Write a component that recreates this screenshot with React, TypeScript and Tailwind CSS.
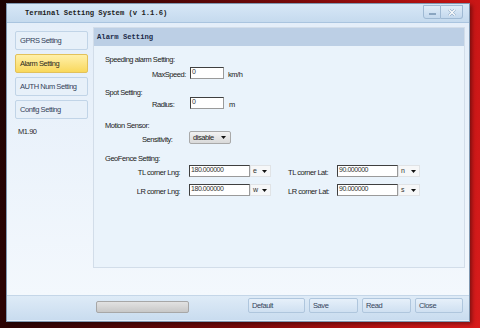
import React from "react";

const Arrow = () => (
  <svg width="5" height="3" viewBox="0 0 5 3" aria-hidden>
    <path d="M0 0h5L2.5 3z" fill="#111" />
  </svg>
);

function TextBox({ value, w }: { value: string; w: string }) {
  return (
    <div
      className={`${w} h-[12px] shrink-0 bg-white border border-[#3f3f3f] border-r-[#9a9a9a] border-b-[#9a9a9a] pl-[1px] text-[7px] leading-[8px] text-[#333] overflow-hidden`}
    >
      {value}
    </div>
  );
}

function DirSelect({ value, w }: { value: string; w: string }) {
  return (
    <div
      className={`${w} h-[12px] shrink-0 flex items-center justify-between bg-[#f6f7f8] border border-[#e0e3e6] pl-[2px] pr-[3px] text-[7px] leading-[8px] text-[#333]`}
    >
      <span>{value}</span>
      <Arrow />
    </div>
  );
}

const navItems = ["GPRS Setting", "Alarm Setting", "AUTH Num Setting", "Config Setting"];

export default function App() {
  return (
    <div className="relative w-[480px] h-[328px] overflow-hidden bg-[linear-gradient(100deg,#1c0303_0%,#3a0505_20%,#7a0909_55%,#c41414_85%,#d81c1c_100%)] font-['Liberation_Sans',Arial,sans-serif]">
      <div className="absolute left-[6px] top-[3px] w-[464px] h-[319px] flex flex-col border border-[#7f97b0] bg-[#e6f0fa] shadow-[2px_2px_4px_rgba(0,0,0,0.4)]">
        {/* Title bar */}
        <div className="h-[19px] flex items-start justify-between bg-gradient-to-b from-[#d7e7f6] to-[#c5daee] border-b border-[#a9c4df]">
          <div className="pl-[18px] h-full flex items-center font-['Liberation_Mono',monospace] font-bold text-[7.2px] text-[#1c1c1c]">
            Terminal Setting System (v 1.1.6)
          </div>
          <div className="flex pr-[6px] pt-[1px]">
            <div className="w-[18px] h-[14px] flex items-end justify-center pb-[3px] bg-gradient-to-b from-[#dfecf8] to-[#c3d8ed] border border-[#9fb9d3] rounded-bl-[3px]">
              <div className="w-[7px] h-[2px] bg-white border border-[#8aa5c0]" />
            </div>
            <div className="w-[22px] h-[14px] flex items-center justify-center bg-gradient-to-b from-[#dfecf8] to-[#c3d8ed] border border-l-0 border-[#9fb9d3] rounded-br-[3px]">
              <svg width="8" height="7" viewBox="0 0 8 7" aria-hidden>
                <path d="M1 0.5L7 6.5M7 0.5L1 6.5" stroke="#8aa5c0" strokeWidth="2.4" />
                <path d="M1 0.5L7 6.5M7 0.5L1 6.5" stroke="#ffffff" strokeWidth="1.2" />
              </svg>
            </div>
          </div>
        </div>

        {/* Body */}
        <div className="h-[272px] flex items-start pt-[4px] pl-[8px] bg-gradient-to-b from-[#e4eef9] to-[#f3f8fd]">
          {/* Nav */}
          <div className="w-[73px] mt-[4px] flex flex-col gap-[4px] text-[7.5px] tracking-[-0.45px]">
            {navItems.map((item) => {
              const active = item === "Alarm Setting";
              return (
                <div
                  key={item}
                  className={
                    active
                      ? "h-[19px] flex items-center pl-[4px] rounded-[2px] border border-[#e2c15a] bg-gradient-to-b from-[#fff0a8] to-[#f9d85a] text-[#2e2a1c]"
                      : "h-[19px] flex items-center pl-[4px] rounded-[2px] border border-[#c1d4e7] bg-[#e7f0f9] text-[#34425a]"
                  }
                >
                  {item}
                </div>
              );
            })}
            <div className="mt-[4px] pl-[3px] leading-[9px] text-[#2a2a2a]">M1.90</div>
          </div>

          {/* Panel */}
          <div className="ml-[5px] w-[372px] h-[241px] flex flex-col border border-[#d2dde9] bg-[#eaf3fb] text-[7.5px] tracking-[-0.45px] text-[#222]">
            <div className="h-[18px] flex items-center pl-[3px] bg-[#bccfe5] font-['Liberation_Mono',monospace] font-bold text-[7.2px] tracking-normal text-[#1b2a48]">
              Alarm Setting
            </div>
            <div className="flex flex-col pl-[11px]">
              <div className="mt-[10px] h-[8px] leading-[8px]">Speeding alarm Setting:</div>
              <div className="mt-[3px] h-[12px] flex items-start">
                <div className="w-[85px] pl-[47px] pt-[3px] leading-[9px]">MaxSpeed:</div>
                <TextBox value="0" w="w-[34px]" />
                <div className="ml-[4px] pt-[3px] leading-[9px]">km/h</div>
              </div>

              <div className="mt-[10px] h-[8px] leading-[8px]">Spot Setting:</div>
              <div className="h-[12px] flex items-start">
                <div className="w-[85px] pl-[47px] pt-[3px] leading-[9px]">Radius:</div>
                <TextBox value="0" w="w-[34px]" />
                <div className="ml-[5px] pt-[3px] leading-[9px]">m</div>
              </div>

              <div className="mt-[13px] h-[8px] leading-[8px]">Motion Sensor:</div>
              <div className="mt-[1px] h-[13px] flex items-start">
                <div className="w-[84px] pl-[37px] pt-[4px] leading-[9px]">Sensitivity:</div>
                <div className="w-[42px] h-[13px] flex items-center justify-between pl-[3px] pr-[4px] rounded-[2px] border border-[#a9a9a9] bg-gradient-to-b from-[#f2f2f2] to-[#d9d9d9] text-[#222]">
                  <span>disable</span>
                  <Arrow />
                </div>
              </div>

              <div className="mt-[11px] h-[8px] leading-[8px]">GeoFence Setting:</div>
              <div className="mt-[2px] h-[12px] flex items-start">
                <div className="w-[84px] pr-[9px] pt-[3px] leading-[9px] text-right">TL corner Lng:</div>
                <TextBox value="180.000000" w="w-[61px]" />
                <DirSelect value="e" w="w-[21px]" />
                <div className="ml-[17px] w-[49px] pt-[3px] leading-[9px] whitespace-nowrap">TL corner Lat:</div>
                <TextBox value="90.000000" w="w-[61px]" />
                <DirSelect value="n" w="w-[22px]" />
              </div>
              <div className="mt-[7px] h-[12px] flex items-start">
                <div className="w-[84px] pr-[9px] pt-[3px] leading-[9px] text-right">LR corner Lng:</div>
                <TextBox value="180.000000" w="w-[61px]" />
                <DirSelect value="w" w="w-[21px]" />
                <div className="ml-[17px] w-[49px] pt-[3px] leading-[9px] whitespace-nowrap">LR corner Lat:</div>
                <TextBox value="90.000000" w="w-[61px]" />
                <DirSelect value="s" w="w-[22px]" />
              </div>
            </div>
          </div>
        </div>

        {/* Footer */}
        <div className="h-[25px] flex items-start pt-[2px] border-t border-[#c4d6e8] bg-gradient-to-b from-[#deebf7] to-[#c9dcef] text-[7.5px] tracking-[-0.4px] text-[#34435c]">
          <div className="ml-[89px] mt-[3px] w-[93px] h-[12px] rounded-[2px] border border-[#a7a7a7] bg-gradient-to-b from-[#e2e2e2] to-[#c8c8c8]" />
          <div className="ml-[59px] w-[57px] h-[15px] flex items-center pl-[3px] rounded-[2px] border border-[#afc6dd] bg-gradient-to-b from-[#e6f0fa] to-[#cfe0f1]">Default</div>
          <div className="ml-[4px] w-[49px] h-[15px] flex items-center pl-[3px] rounded-[2px] border border-[#afc6dd] bg-gradient-to-b from-[#e6f0fa] to-[#cfe0f1]">Save</div>
          <div className="ml-[4px] w-[49px] h-[15px] flex items-center pl-[3px] rounded-[2px] border border-[#afc6dd] bg-gradient-to-b from-[#e6f0fa] to-[#cfe0f1]">Read</div>
          <div className="ml-[4px] w-[48px] h-[15px] flex items-center pl-[3px] rounded-[2px] border border-[#afc6dd] bg-gradient-to-b from-[#e6f0fa] to-[#cfe0f1]">Close</div>
        </div>
      </div>
    </div>
  );
}
